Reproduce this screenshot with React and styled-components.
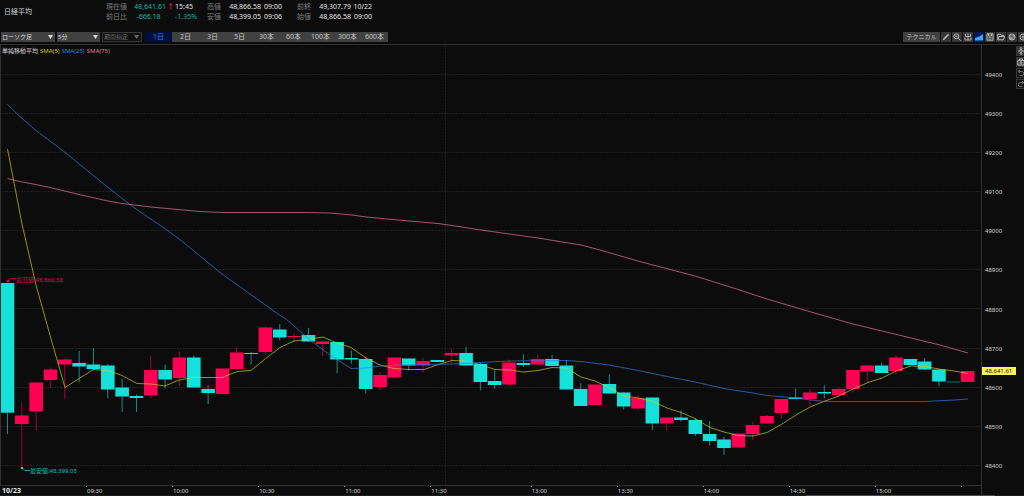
import React from "react";
import styled, { createGlobalStyle, css } from "styled-components";

const Global = createGlobalStyle`
  * { box-sizing: border-box; }
  html, body { margin: 0; background: #0c0c0c; }
  body {
    font: 7px/10px "Noto Sans", "Noto Sans CJK JP", sans-serif;
    color: #d2d2d2;
    overflow: hidden;
  }
  button, select { font: inherit; color: inherit; margin: 0; padding: 0; border: 0; }
`;

const UP = "#ff0055";
const DOWN = "#14e2da";

const Page = styled.div`
  display: flex;
  flex-direction: column;
  min-height: 100vh;
`;

const Header = styled.header`
  display: flex;
  gap: 15px;
  padding: 2px 4px 9px;
`;

const Title = styled.h1`
  width: 87px;
  margin: 5px 0 0;
  font-size: 7px;
  font-weight: 400;
`;

const Quotes = styled.div`
  display: grid;
  grid-template-columns: ${(p) => p.$columns};
  align-content: start;
  white-space: nowrap;
  text-align: right;
  color: ${(p) => (p.$down ? "#12b5ae" : "#e4e4e4")};
`;

const QuoteLabel = styled.span`
  color: #7c7c7c;
  text-align: left;
`;

const QuoteTime = styled.span`
  color: #e4e4e4;
`;

const Arrow = styled.b`
  color: ${UP};
  text-align: center;
`;

const Toolbar = styled.div`
  display: flex;
  align-items: center;
  gap: 2px;
  height: 11px;
  padding-left: 1px;
  margin-bottom: 2px;
  overflow: hidden;
  white-space: nowrap;
`;

const SelectBox = styled.label`
  position: relative;
  width: ${(p) => p.$width};
  height: 10px;
  background: ${(p) => (p.$off ? "#101010" : "#414141")};
  border: ${(p) => (p.$off ? "1px solid #383838" : "0")};
  color: ${(p) => (p.$off ? "#6a6a6a" : "#dedede")};
  select {
    display: block;
    width: 100%;
    height: 100%;
    padding-left: 1px;
    appearance: none;
    background: none;
    font-size: 6px;
    line-height: 8px;
    opacity: 1;
  }
  svg {
    position: absolute;
    right: 2px;
    top: calc(50% - 2px);
    width: 5px;
    height: 4px;
    fill: currentColor;
    pointer-events: none;
  }
`;

const Ranges = styled.div`
  display: flex;
  margin-left: 1px;
`;

const buttonFace = css`
  background: #404040;
  color: #c6c6c6;
  height: 10px;
`;

const RangeButton = styled.button`
  ${buttonFace}
  width: 27px;
  line-height: 10px;
  ${(p) => p.$active && "background: #000f3c; color: #2a93e6;"}
`;

const Tools = styled.div`
  display: flex;
  gap: 1px;
  margin: 0 -4px 0 auto;
`;

const TextButton = styled.button`
  ${buttonFace}
  width: 37px;
  font-size: 6px;
`;

const IconButton = styled.button`
  ${buttonFace}
  display: grid;
  place-items: center;
  flex: none;
  width: 10px;
  background: ${(p) => (p.$active ? "#001a52" : p.$off ? "#101010" : "#363636")};
  outline: ${(p) => (p.$off ? "1px solid #3a3a3a" : "0")};
  outline-offset: -1px;
  svg {
    width: 8px;
    height: 8px;
    fill: none;
    stroke: ${(p) => (p.$off ? "#777" : "#b8b8b8")};
    stroke-width: 1;
  }
`;

const Main = styled.main`
  flex: 1;
  display: flex;
  border-top: 1px solid #303030;
`;

const ChartColumn = styled.section`
  flex: 1;
  min-width: 0;
  display: flex;
  flex-direction: column;
`;

const Plot = styled.div`
  position: relative;
  flex: 1;
  min-height: 300px;
  border-left: 1px solid #303030;
`;

const PlotSvg = styled.svg`
  position: absolute;
  inset: 0;
  width: 100%;
  height: 100%;
`;

const Legend = styled.div`
  position: relative;
  display: flex;
  gap: 2px;
  padding: 1px 0 0 1px;
  font-size: 6px;
`;

const LegendItem = styled.span`
  color: ${(p) => p.$color};
`;

const Note = styled.span`
  position: absolute;
  left: ${(p) => p.$left};
  top: ${(p) => p.$top};
  font-size: 6px;
  line-height: 8px;
  white-space: nowrap;
  color: ${(p) => p.$color};
`;

const TimeAxis = styled.div`
  display: grid;
  grid-template-columns: 6fr 6fr 6fr 6fr 6fr 7fr 6fr 6fr 6fr 6fr 6fr 1.4fr;
  height: 10px;
  border-top: 1px solid #303030;
  font-size: 6px;
  line-height: 10px;
`;

const Tick = styled.span`
  position: relative;
  min-width: 0;
  padding-left: 1px;
  &:first-child { padding-left: 2px; font-size: 7px; font-weight: 700; color: #e8e8e8; }
  &:not(:first-child)::before {
    content: "";
    position: absolute;
    left: 0;
    top: 0;
    width: 1px;
    height: 1px;
    background: #aaa;
  }
`;

const Side = styled.aside`
  position: relative;
  flex: none;
  display: flex;
  justify-content: space-between;
  width: 43px;
  overflow: hidden;
  border-left: 1px solid #303030;
`;

const PriceScale = styled.div`
  display: grid;
  grid-auto-rows: 1fr;
  align-items: center;
  padding: 10px 0 9px 3px;
  font-size: 6px;
`;

const PriceTag = styled.output`
  position: absolute;
  left: 0;
  top: 71.6%;
  width: 34px;
  padding-left: 3px;
  background: #fff056;
  color: #222;
  font-size: 6px;
  line-height: 8px;
`;

const SideTools = styled.div`
  display: flex;
  flex-direction: column;
  gap: 1px;
  width: 8px;
  padding-top: 1px;
`;

const ScrollTrack = styled.div`
  display: flex;
  justify-content: flex-end;
  height: 1px;
  padding-right: 29px;
  background: #1c1c1c;
`;

const ScrollThumb = styled.div`
  width: 19%;
  background: #4a4a4a;
`;

/* top, bottom, high, low, rising */
const candles = [
  [283, 412.7, 283, 434, 0], [415.5, 424, 402.5, 467, 1], [382.5, 411.5, 382.5, 430.5, 1],
  [369.5, 380, 367.5, 387.5, 1], [359.5, 364.5, 359.5, 399.5, 1], [363, 366.5, 351, 382.5, 0],
  [364.5, 369, 348, 370.5, 0], [365.5, 389.5, 364, 398.5, 0], [387.5, 396.5, 378.5, 412, 0],
  [396, 398, 394.5, 412, 0], [370, 395.5, 356, 398.5, 1], [370, 379.5, 364.5, 388.5, 0],
  [357.5, 378, 351.5, 386, 1], [357.5, 387.5, 355.5, 387.5, 0], [389, 393, 385, 404, 0],
  [368.5, 394, 368.5, 395, 1], [352.5, 369, 347.5, 370, 1], [353, 354, 352, 364.5, 0],
  [327.5, 352, 326.5, 354.5, 1], [329.5, 337.5, 324, 340.5, 0], [336, 337, 333.5, 342.5, 1],
  [335, 341.5, 328, 341.5, 0], [341.5, 344, 341.5, 356, 1], [342, 359.5, 342, 373.5, 0],
  [358, 359.5, 350.5, 363.5, 0], [359, 389, 357, 393.5, 0], [375, 387, 372, 390, 1],
  [357.5, 377.5, 357.5, 378.5, 1], [358.5, 365.5, 358.5, 370.5, 0], [361, 365.5, 358, 372.5, 1],
  [360, 362, 360, 362, 0], [353, 355.5, 349, 364, 1], [353, 365.5, 347, 365.5, 0],
  [364, 382, 363, 390.5, 0], [381, 385, 369.5, 388.5, 0], [362.5, 384.5, 359.5, 384.5, 1],
  [363, 365, 354, 367, 0], [359, 364.5, 354.5, 365, 1], [359, 366, 355, 366, 0],
  [365.5, 389.5, 360.5, 389.5, 0], [389, 406, 383, 406, 0], [384.5, 405, 384.5, 405, 1],
  [384, 393.5, 374.5, 393.5, 0], [392.5, 406.5, 392.5, 409.5, 0], [398, 408.5, 395, 409.5, 1],
  [397.5, 423.5, 397.5, 430, 0], [417.5, 423.5, 417, 430.5, 1], [417.5, 420, 410.5, 421.5, 0],
  [420, 434, 418, 436, 0], [434, 441, 421, 445.5, 0], [439.5, 448, 437, 455, 0],
  [433.5, 447.5, 433.5, 448, 1], [425, 434, 422, 440, 1], [416, 423.5, 415, 424, 1],
  [399, 413, 398, 418.5, 1], [397.5, 399, 388.5, 399, 0], [392.5, 399, 389, 405.5, 1],
  [392, 393.5, 385, 398.5, 0], [389, 395, 387, 396.5, 1], [370, 389, 370, 392.5, 1],
  [365.5, 371.5, 365, 382.5, 1], [365.5, 373, 362.5, 373, 0], [357.5, 371, 355, 374.5, 1],
  [359, 365, 359, 365, 0], [361.5, 369.5, 358, 370, 0], [369.5, 381.5, 369, 386.5, 0],
  [381.6, 382.4, 382, 382, 0], [371, 382, 370.5, 382, 1],
];

const SLOT = 14.33;

const averages = [
  {
    name: "SMA(5)", color: "#d6cb1c",
    points: "7.5,149 22,224 36,285 50.5,337 65,387.5 79,378.5 93.5,369.5 108,370.5 122,375.5 137,383.5 151,384 165,386 179,380 194,377.5 222,377.5 237,371.5 251,370.5 265,359 280,347.5 294,341 308,339.5 323,337 337,343 351,347.5 366,358 380,365 394,368.5 409,369.5 424,369.5 437,365 452,360.5 466,361 480,364.5 495,369.5 510,370 523,372 538,370.5 552,367.5 566,368 581,377 595,381 609,387.5 624,396 638,398 652,401 667,408 681,412.5 695,418.5 710,427.5 724,432 738,435.5 753,436 767,432.5 782,424 796,415 810,407 825,401 839,396 853,389 868,382.5 882,378 896,371 911,366 925,366.5 939,369 954,371 968,373.5",
  },
  {
    name: "SMA(25)", color: "#2f7fe6",
    points: "7.5,104.5 20,116.7 33,128 67,154 100,181 133,207 167,230 183,242 200,256 222,274 250,294 278,314 286,319 310,340 330,355 351,368.5 366,368 380,366 400,365 452,364 480,362.5 510,361 566,360.5 581,361.5 609,365 638,370.5 667,376.5 695,382 724,388.5 753,393 767,395.5 796,398 811,400 825,401.5 925,401.5 954,400 968,399",
  },
  {
    name: "SMA(75)", color: "#e87a9a",
    points: "7.5,178.5 22,182 36,184.5 50,187.5 79,194.5 108,201 122,203.5 151,207 200,211.5 222,212.5 308,212.5 330,213 352,215 366,217 409,221 438,223.5 452,225.5 481,230 538,238 581,245 600,250 638,261 653,265 695,276 738,289.5 767,299 811,312 853,324 882,331 911,338 940,345 968,353",
  },
];

const prices = [49400, 49300, 49200, 49100, 49000, 48900, 48800, 48700, 48600, 48500, 48400];
const times = ["10/23", "09:30", "10:00", "10:30", "11:00", "11:30", "13:00", "13:30", "14:00", "14:30", "15:00", ""];
const ranges = ["1日", "2日", "3日", "5日", "30本", "60本", "100本", "300本", "600本"];

const icons = {
  "描画": <path d="M1.2 6.8L6.6 1.4" strokeWidth="1.6" />,
  "縮小": <><circle cx="3.3" cy="3.3" r="2.5" /><path d="M5.2 5.2L7.6 7.6M2 3.3h2.6" /></>,
  "分割": <path d="M1.5 .8v2.7h5V.8M4 .3v6.700M1 4.500V7h6V4.500" strokeWidth=".9" />,
  "出来高": <path d="M0 7.5V5l2.5-1L5 3.3 8 1v6.5z" fill="#35a5ff" stroke="none" />,
  "保存": <><path d="M1 .8h6v6.400H1zM2.500 1v2h3V1" /><path d="M2.400 4.600h3.200M2.400 6h3.200" strokeWidth=".7" /></>,
  "開く": <path d="M.8 6.8V1.2h2.400l.8 1h2.600v1.200M.8 6.8l1.200-3.300h5.600L6.400 6.8z" />,
  "配色": <><circle cx="4" cy="4" r="3" fill="#909090" /><path d="M4 1v3l2.500 1.500M1.800 3.400h1" stroke="#333" strokeWidth=".7" /></>,
  "設定": <><circle cx="4" cy="4" r="3" /><circle cx="4" cy="4" r="1" /></>,
};

const sideIcons = [
  ["高さ調整", false, <path d="M1 4h6M4 0v2.6M4 8V5.4M2.6 1.5L4 2.8l1.4-1.3M2.6 6.5L4 5.2l1.4 1.3" />],
  ["撮影", false, <><path d="M.8 2.6h6.4v4.4H.8zM2.5 2.4V1h3v1.4" /><circle cx="4" cy="4.8" r="1" /></>],
  ["元に戻す", true, <path d="M3 1L1.2 2.6 3 4.2M1.4 2.6h3.4q2 0 2 2t-2 2H2.5" />],
  ["やり直し", true, <path d="M5 1l1.8 1.6L5 4.2M6.6 2.6H3.2q-2 0-2 2t2 2h2.3" />],
];

function Dropdown({ label, width, off, text }) {
  return (
    <SelectBox $width={width} $off={off}>
      <select aria-label={label} disabled={off}>
        <option>{text}</option>
      </select>
      <svg viewBox="0 0 5 4"><path d="M0 0h5L2.5 4z" /></svg>
    </SelectBox>
  );
}

function Candle({ index, data }) {
  const [top, bottom, high, low, rising] = data;
  const color = rising ? UP : DOWN;
  const x = 7.5 + index * SLOT;
  return (
    <g>
      <path d={`M${x} ${high}V${low}`} stroke={color} strokeOpacity="0.6" />
      <rect x={x - 6.8} y={top} width="13.6" height={bottom - top} fill={color} fillOpacity={bottom - top < 1 ? 0.6 : 1} />
    </g>
  );
}

export default function App() {
  return (
    <Page>
      <Global />
      <Header>
        <Title>日経平均</Title>
        <Quotes $columns="22px 38px 9px 17px" $down>
          <QuoteLabel>現在値</QuoteLabel><span>48,641.61</span><Arrow>↑</Arrow><QuoteTime>15:45</QuoteTime>
          <QuoteLabel>前日比</QuoteLabel><span>-666.18&nbsp;&nbsp;&nbsp;</span><span /><span>-1.35%</span>
        </Quotes>
        <Quotes $columns="22px 32px 21px">
          <QuoteLabel>高値</QuoteLabel><span>48,866.58</span><span>09:00</span>
          <QuoteLabel>安値</QuoteLabel><span>48,399.05</span><span>09:06</span>
        </Quotes>
        <Quotes $columns="22px 32px 21px">
          <QuoteLabel>前終</QuoteLabel><span>49,307.79</span><span>10/22</span>
          <QuoteLabel>始値</QuoteLabel><span>48,866.58</span><span>09:00</span>
        </Quotes>
      </Header>

      <Toolbar>
        <Dropdown label="チャート種類" width="54px" text="ローソク足" />
        <Dropdown label="足種" width="43px" text="5分" />
        <Dropdown label="期間" width="40px" text="期間指定" off />
        <Ranges>
          {ranges.map((r, i) => <RangeButton key={r} $active={i === 0}>{r}</RangeButton>)}
        </Ranges>
        <Tools>
          <TextButton>テクニカル</TextButton>
          {Object.entries(icons).map(([name, icon]) => (
            <IconButton key={name} aria-label={name} $active={name === "出来高"}>
              <svg viewBox="0 0 8 8">{icon}</svg>
            </IconButton>
          ))}
        </Tools>
      </Toolbar>

      <Main>
        <ChartColumn>
          <Plot>
            <PlotSvg viewBox="1 45 980 440" preserveAspectRatio="none" fill="none">
              <g stroke="#1f1f1f" strokeDasharray="2 1">
                {prices.map((p, i) => <path key={p} d={`M0 ${Math.floor(74 + i * 39.15) + 0.5}H981`} />)}
                <path d="M445.5 45V485" />
              </g>
              {candles.map((c, i) => <Candle key={i} index={i} data={c} />)}
              {averages.map((a) => (
                <polyline key={a.name} points={a.points} stroke={a.color} strokeOpacity="0.68" strokeLinejoin="round" />
              ))}
              <path d="M8 280.5l2-2h5" stroke={UP} strokeOpacity="0.7" />
              <rect x="7" y="280" width="2" height="2" fill={UP} />
              <path d="M22 468l3 2.5h5" stroke={DOWN} strokeOpacity="0.7" />
              <rect x="21" y="467" width="2" height="2" fill={DOWN} />
            </PlotSvg>
            <Legend>
              <span>単純移動平均</span>
              {averages.map((a) => <LegendItem key={a.name} $color={a.color}>{a.name}</LegendItem>)}
            </Legend>
            <Note $left="15px" $top="52.4%" $color="#dc0c50">最高値:48,866.58</Note>
            <Note $left="29px" $top="96%" $color="#14c0ba">最安値:48,399.05</Note>
          </Plot>
          <TimeAxis>
            {times.map((t) => <Tick key={t}>{t}</Tick>)}
          </TimeAxis>
        </ChartColumn>
        <Side>
          <PriceScale>
            {prices.map((p) => <span key={p}>{p}</span>)}
          </PriceScale>
          <PriceTag>48,641.61</PriceTag>
          <SideTools>
            {sideIcons.map(([name, off, icon]) => (
              <IconButton key={name} aria-label={name} $off={off}>
                <svg viewBox="0 0 8 8">{icon}</svg>
              </IconButton>
            ))}
          </SideTools>
        </Side>
      </Main>
      <ScrollTrack><ScrollThumb /></ScrollTrack>
    </Page>
  );
}
